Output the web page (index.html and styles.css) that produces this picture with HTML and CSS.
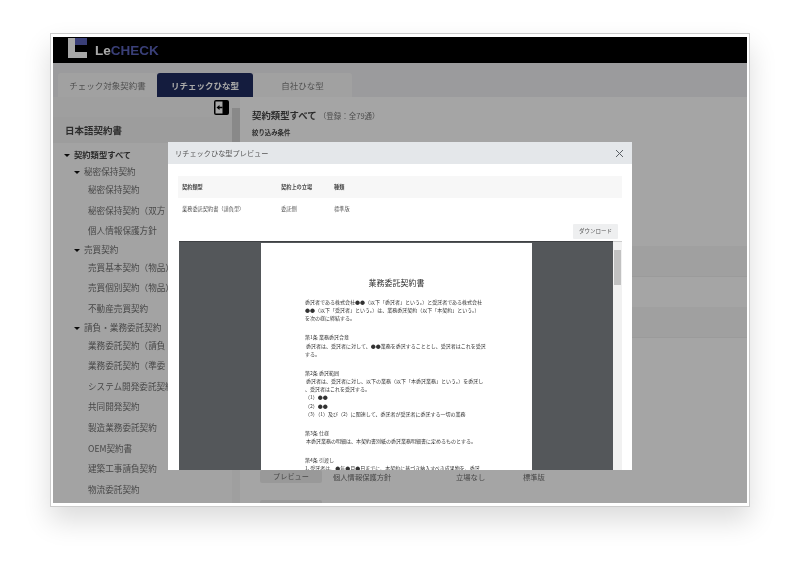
FILE: index.html
```html
<!DOCTYPE html>
<html lang="ja">
<head>
    <meta charset="UTF-8">
    <meta name="viewport" content="width=device-width, initial-scale=1.0">
    <title>LeCHECK</title>
    <link rel="stylesheet" href="styles.css">
</head>
<body>
<div class="frame">
  <div class="app">
    <header class="topbar">
      <svg class="logo-mark" width="20" height="20" viewBox="0 0 20 20">
        <rect x="1" y="0" width="7" height="20" fill="#fff"/>
        <rect x="1" y="14" width="19" height="6" fill="#fff"/>
        <rect x="8" y="0" width="12" height="7" fill="#5860b6"/>
      </svg>
      <span class="logo-text">Le<span class="logo-blue">CHECK</span></span>
    </header>

    <nav class="tabs">
      <div class="tab">チェック対象契約書</div>
      <div class="tab tab-active">リチェックひな型</div>
      <div class="tab">自社ひな型</div>
    </nav>

    <div class="content">
      <aside class="sidebar">
        <div class="side-tools">
          <svg class="collapse-icon" width="15" height="15" viewBox="0 0 15 15">
            <rect x="0" y="0" width="15" height="15" rx="2" fill="#000"/>
            <rect x="1.5" y="1.5" width="7" height="12" fill="#fff"/>
            <path d="M2.5 7.5 L5.5 5 V6.8 H8.5 V8.2 H5.5 V10 Z" fill="#000"/>
          </svg>
        </div>
        <div class="side-title">日本語契約書</div>
        <ul class="tree">
          <li class="tree-root"><span class="caret"></span>契約類型すべて</li>
          <li class="tree-group"><span class="caret"></span>秘密保持契約</li>
          <li class="tree-leaf">秘密保持契約</li>
          <li class="tree-leaf">秘密保持契約（双方</li>
          <li class="tree-leaf">個人情報保護方針</li>
          <li class="tree-group"><span class="caret"></span>売買契約</li>
          <li class="tree-leaf">売買基本契約（物品）</li>
          <li class="tree-leaf">売買個別契約（物品）</li>
          <li class="tree-leaf">不動産売買契約</li>
          <li class="tree-group"><span class="caret"></span>請負・業務委託契約</li>
          <li class="tree-leaf">業務委託契約（請負</li>
          <li class="tree-leaf">業務委託契約（準委</li>
          <li class="tree-leaf">システム開発委託契約</li>
          <li class="tree-leaf">共同開発契約</li>
          <li class="tree-leaf">製造業務委託契約</li>
          <li class="tree-leaf">OEM契約書</li>
          <li class="tree-leaf">建築工事請負契約</li>
          <li class="tree-leaf">物流委託契約</li>
        </ul>
      </aside>
      <div class="side-scroll"><div class="side-thumb"></div></div>

      <main class="main">
        <h1 class="main-title">契約類型すべて <small>（登録：全79通）</small></h1>
        <div class="filter-label">絞り込み条件</div>
        <div class="stripe"></div>
        <div class="stripe stripe-plain"></div>
        <div class="stripe"></div>
        <div class="result-row">
          <div class="preview-btn">プレビュー</div>
          <div>個人情報保護方針</div>
          <div>立場なし</div>
          <div>標準版</div>
        </div>
        <div class="preview-btn next-btn"></div>
      </main>
    </div>

    <div class="backdrop"></div>

    <section class="modal">
      <div class="modal-head">
        <span>リチェックひな型プレビュー</span>
        <svg width="9" height="9" viewBox="0 0 9 9">
          <path d="M1 1 L8 8 M8 1 L1 8" stroke="#5a5f65" stroke-width="1" fill="none"/>
        </svg>
      </div>
      <div class="modal-body">
        <div class="info-row info-head">
          <div>契約類型</div>
          <div>契約上の立場</div>
          <div>種類</div>
        </div>
        <div class="info-row">
          <div>業務委託契約書（請負型）</div>
          <div>委託側</div>
          <div>標準版</div>
        </div>
        <div class="download-wrap"><div class="download">ダウンロード</div></div>
        <div class="viewer">
          <div class="viewer-canvas">
            <div class="doc-page">
              <h2 class="doc-title">業務委託契約書</h2>
              <div class="doc-block">
                <p>委託者である株式会社●●（以下「委託者」という。）と受託者である株式会社</p>
                <p>●●（以下「受託者」という。）は、業務委託契約（以下「本契約」という。）</p>
                <p>を次の様に締結する。</p>
              </div>
              <div class="doc-block">
                <p>第1条 業務委託合意</p>
                <p>&nbsp;委託者は、受託者に対して、●●業務を委託することとし、受託者はこれを受託</p>
                <p>する。</p>
              </div>
              <div class="doc-block">
                <p>第2条 委託範囲</p>
                <p>&nbsp;委託者は、受託者に対し、以下の業務（以下「本委託業務」という。）を委託し</p>
                <p>、受託者はこれを受託する。</p>
                <p>（1）●●</p>
                <p>（2）●●</p>
                <p>（3）（1）及び（2）に関連して、委託者が受託者に委託する一切の業務</p>
              </div>
              <div class="doc-block">
                <p>第3条 仕様</p>
                <p>&nbsp;本委託業務の明細は、本契約書別紙の委託業務明細書に定めるものとする。</p>
              </div>
              <div class="doc-block">
                <p>第4条 引渡し</p>
                <p>1. 受託者は、●年●月●日までに、本契約に基づき納入すべき成果物を、委託</p>
              </div>
            </div>
          </div>
          <div class="viewer-scroll"><div class="viewer-thumb"></div></div>
        </div>
      </div>
    </section>
  </div>
</div>
</body>
</html>
```

FILE: styles.css
```css
* {
    box-sizing: border-box;
}
body {
    height: 573px;
    margin: 0;
    padding: 33px 50px 0;
    overflow: hidden;
    background-color: #fff;
    font-family: "Noto Sans CJK JP", "Noto Sans", sans-serif;
}
.frame {
    width: 700px;
    height: 474px;
    padding: 3px 2px;
    background-color: #fff;
    border: 1px solid #ccc;
    box-shadow: 0 14px 26px 0 rgba(0, 0, 0, 0.14);
}
.app {
    position: relative;
    display: flex;
    flex-direction: column;
    height: 100%;
    overflow: hidden;
    background-color: #fbfbfb;
    filter: blur(0.35px);
}

/* top bar */
.topbar {
    display: flex;
    align-items: center;
    flex: none;
    height: 26px;
    padding-left: 14px;
    background-color: #000;
}
.logo-mark {
    margin: 0 8px 4px 0;
}
.logo-text {
    font-family: "Liberation Sans", Arial, sans-serif;
    font-size: 13.5px;
    font-weight: bold;
    color: #fff;
}
.logo-blue {
    color: #5860b6;
}

/* tabs */
.tabs {
    display: flex;
    flex: none;
    height: 34px;
    padding: 10px 0 0 5px;
    background-color: #ebebef;
}
.tab {
    width: 99px;
    line-height: 24px;
    text-align: center;
    font-size: 8.5px;
    color: #7c7c7c;
    background-color: #f4f4f4;
    border-radius: 3px 3px 0 0;
}
.tab-active {
    width: 96px;
    font-weight: bold;
    color: #fff;
    background-color: #1f2b5e;
}

/* under the modal */
.content {
    display: flex;
    flex: 1;
    min-height: 0;
}
.sidebar {
    flex: none;
    width: 179px;
    background-color: #f8f8f8;
}
.side-tools {
    display: flex;
    justify-content: flex-end;
    height: 20px;
    padding: 3px 3px 0 0;
    background-color: #f2f2f2;
}
.side-title {
    height: 26px;
    padding-left: 12px;
    font-size: 9.5px;
    font-weight: bold;
    line-height: 26px;
    color: #444;
    background-color: #eeeeee;
}
.tree {
    margin: 3px 0 0;
    padding: 0;
    list-style: none;
    white-space: nowrap;
    color: #6e6e6e;
}
.caret {
    display: inline-block;
    width: 0;
    height: 0;
    margin-right: 4px;
    vertical-align: 1px;
    border-style: solid;
    border-width: 3.5px 3px 0;
    border-color: #111 transparent transparent;
}
.tree-root {
    height: 17px;
    padding-left: 11px;
    font-size: 8.3px;
    font-weight: bold;
    line-height: 17px;
    color: #444;
}
.tree-group {
    height: 16px;
    padding-left: 21px;
    font-size: 8.6px;
    line-height: 16px;
}
.tree-leaf {
    height: 20.6px;
    padding-left: 35px;
    font-size: 8.6px;
    line-height: 20.6px;
}
.side-scroll {
    flex: none;
    width: 8px;
    padding-top: 11px;
    background-color: #f2f2f2;
}
.side-thumb {
    height: 120px;
    background-color: #d0d0d0;
}
.main {
    flex: 1;
    min-width: 0;
    padding: 9px 0 0;
    background-color: #fbfbfb;
}
.main-title {
    margin: 0 0 0 12px;
    font-size: 9.4px;
    font-weight: bold;
    line-height: 18px;
    color: #444;
}
.main-title small {
    font-size: 7.5px;
    font-weight: normal;
    color: #777;
}
.filter-label {
    margin: 2px 0 108px 12px;
    font-size: 6.4px;
    font-weight: bold;
    line-height: 11px;
    color: #444;
}
.stripe {
    height: 31px;
    background-color: #f3f3f3;
    border-bottom: 1px solid #ececec;
}
.stripe-plain {
    height: 30px;
    background-color: #fbfbfb;
    border-bottom: 0;
}
.result-row {
    display: grid;
    grid-template-columns: 62px 134px 67px 1fr;
    align-items: center;
    margin: 132px 0 0 20px;
    font-size: 7.3px;
    color: #6e6e6e;
}
.result-row > div:nth-child(2) {
    padding-left: 11px;
}
.preview-btn {
    height: 13px;
    font-size: 7.2px;
    line-height: 13px;
    text-align: center;
    background-color: #e8e8e8;
    border-radius: 2px;
}
.next-btn {
    width: 62px;
    margin: 17px 0 0 20px;
}

/* modal */
.backdrop {
    position: absolute;
    inset: 0;
    background-color: rgba(0, 0, 0, 0.34);
}
.modal {
    position: absolute;
    top: 105px;
    left: 115px;
    display: flex;
    flex-direction: column;
    width: 464px;
    height: 328px;
    background-color: #fff;
}
.modal-head {
    display: flex;
    align-items: center;
    justify-content: space-between;
    flex: none;
    height: 22px;
    padding: 0 8px 0 7px;
    font-size: 7.2px;
    color: #555;
    background-color: #e4e7ea;
}
.modal-body {
    display: flex;
    flex-direction: column;
    flex: 1;
    min-height: 0;
    padding: 12px 10px 0;
}
.info-row {
    display: grid;
    grid-template-columns: 99px 53px 1fr;
    flex: none;
    height: 22px;
    padding-left: 4px;
    font-size: 5.2px;
    line-height: 22px;
    color: #555;
}
.info-head {
    font-weight: bold;
    color: #444;
    background-color: #f7f7f7;
}
.download-wrap {
    display: flex;
    justify-content: flex-end;
    flex: none;
    padding: 4px 4px 2px 0;
}
.download {
    width: 45px;
    height: 15px;
    font-size: 5.5px;
    line-height: 15px;
    text-align: center;
    color: #555;
    background-color: #eeeff0;
    border-radius: 1px;
}
.viewer {
    display: flex;
    flex: 1;
    min-height: 0;
    margin-left: 1px;
}
.viewer-canvas {
    flex: 1;
    min-width: 0;
    overflow: hidden;
    padding-top: 1px;
    background-color: #54575a;
    border-top: 1px solid #3f4144;
}
.doc-page {
    width: 271px;
    height: 400px;
    margin-left: 82px;
    padding: 34px 0 0 44px;
    background-color: #fff;
    color: #333;
}
.doc-title {
    width: 183px;
    margin: 0 0 9px;
    font-size: 8px;
    font-weight: normal;
    line-height: 12px;
    text-align: center;
    color: #333;
}
.doc-block {
    margin-bottom: 10.8px;
    font-size: 5px;
    line-height: 8.2px;
    white-space: nowrap;
}
.doc-block p {
    margin: 0;
}
.viewer-scroll {
    flex: none;
    width: 9px;
    padding: 8px 1px 0;
    background-color: #f1f1f1;
    border-top: 1px solid #ccc;
}
.viewer-thumb {
    height: 35px;
    background-color: #c1c1c1;
}
```
